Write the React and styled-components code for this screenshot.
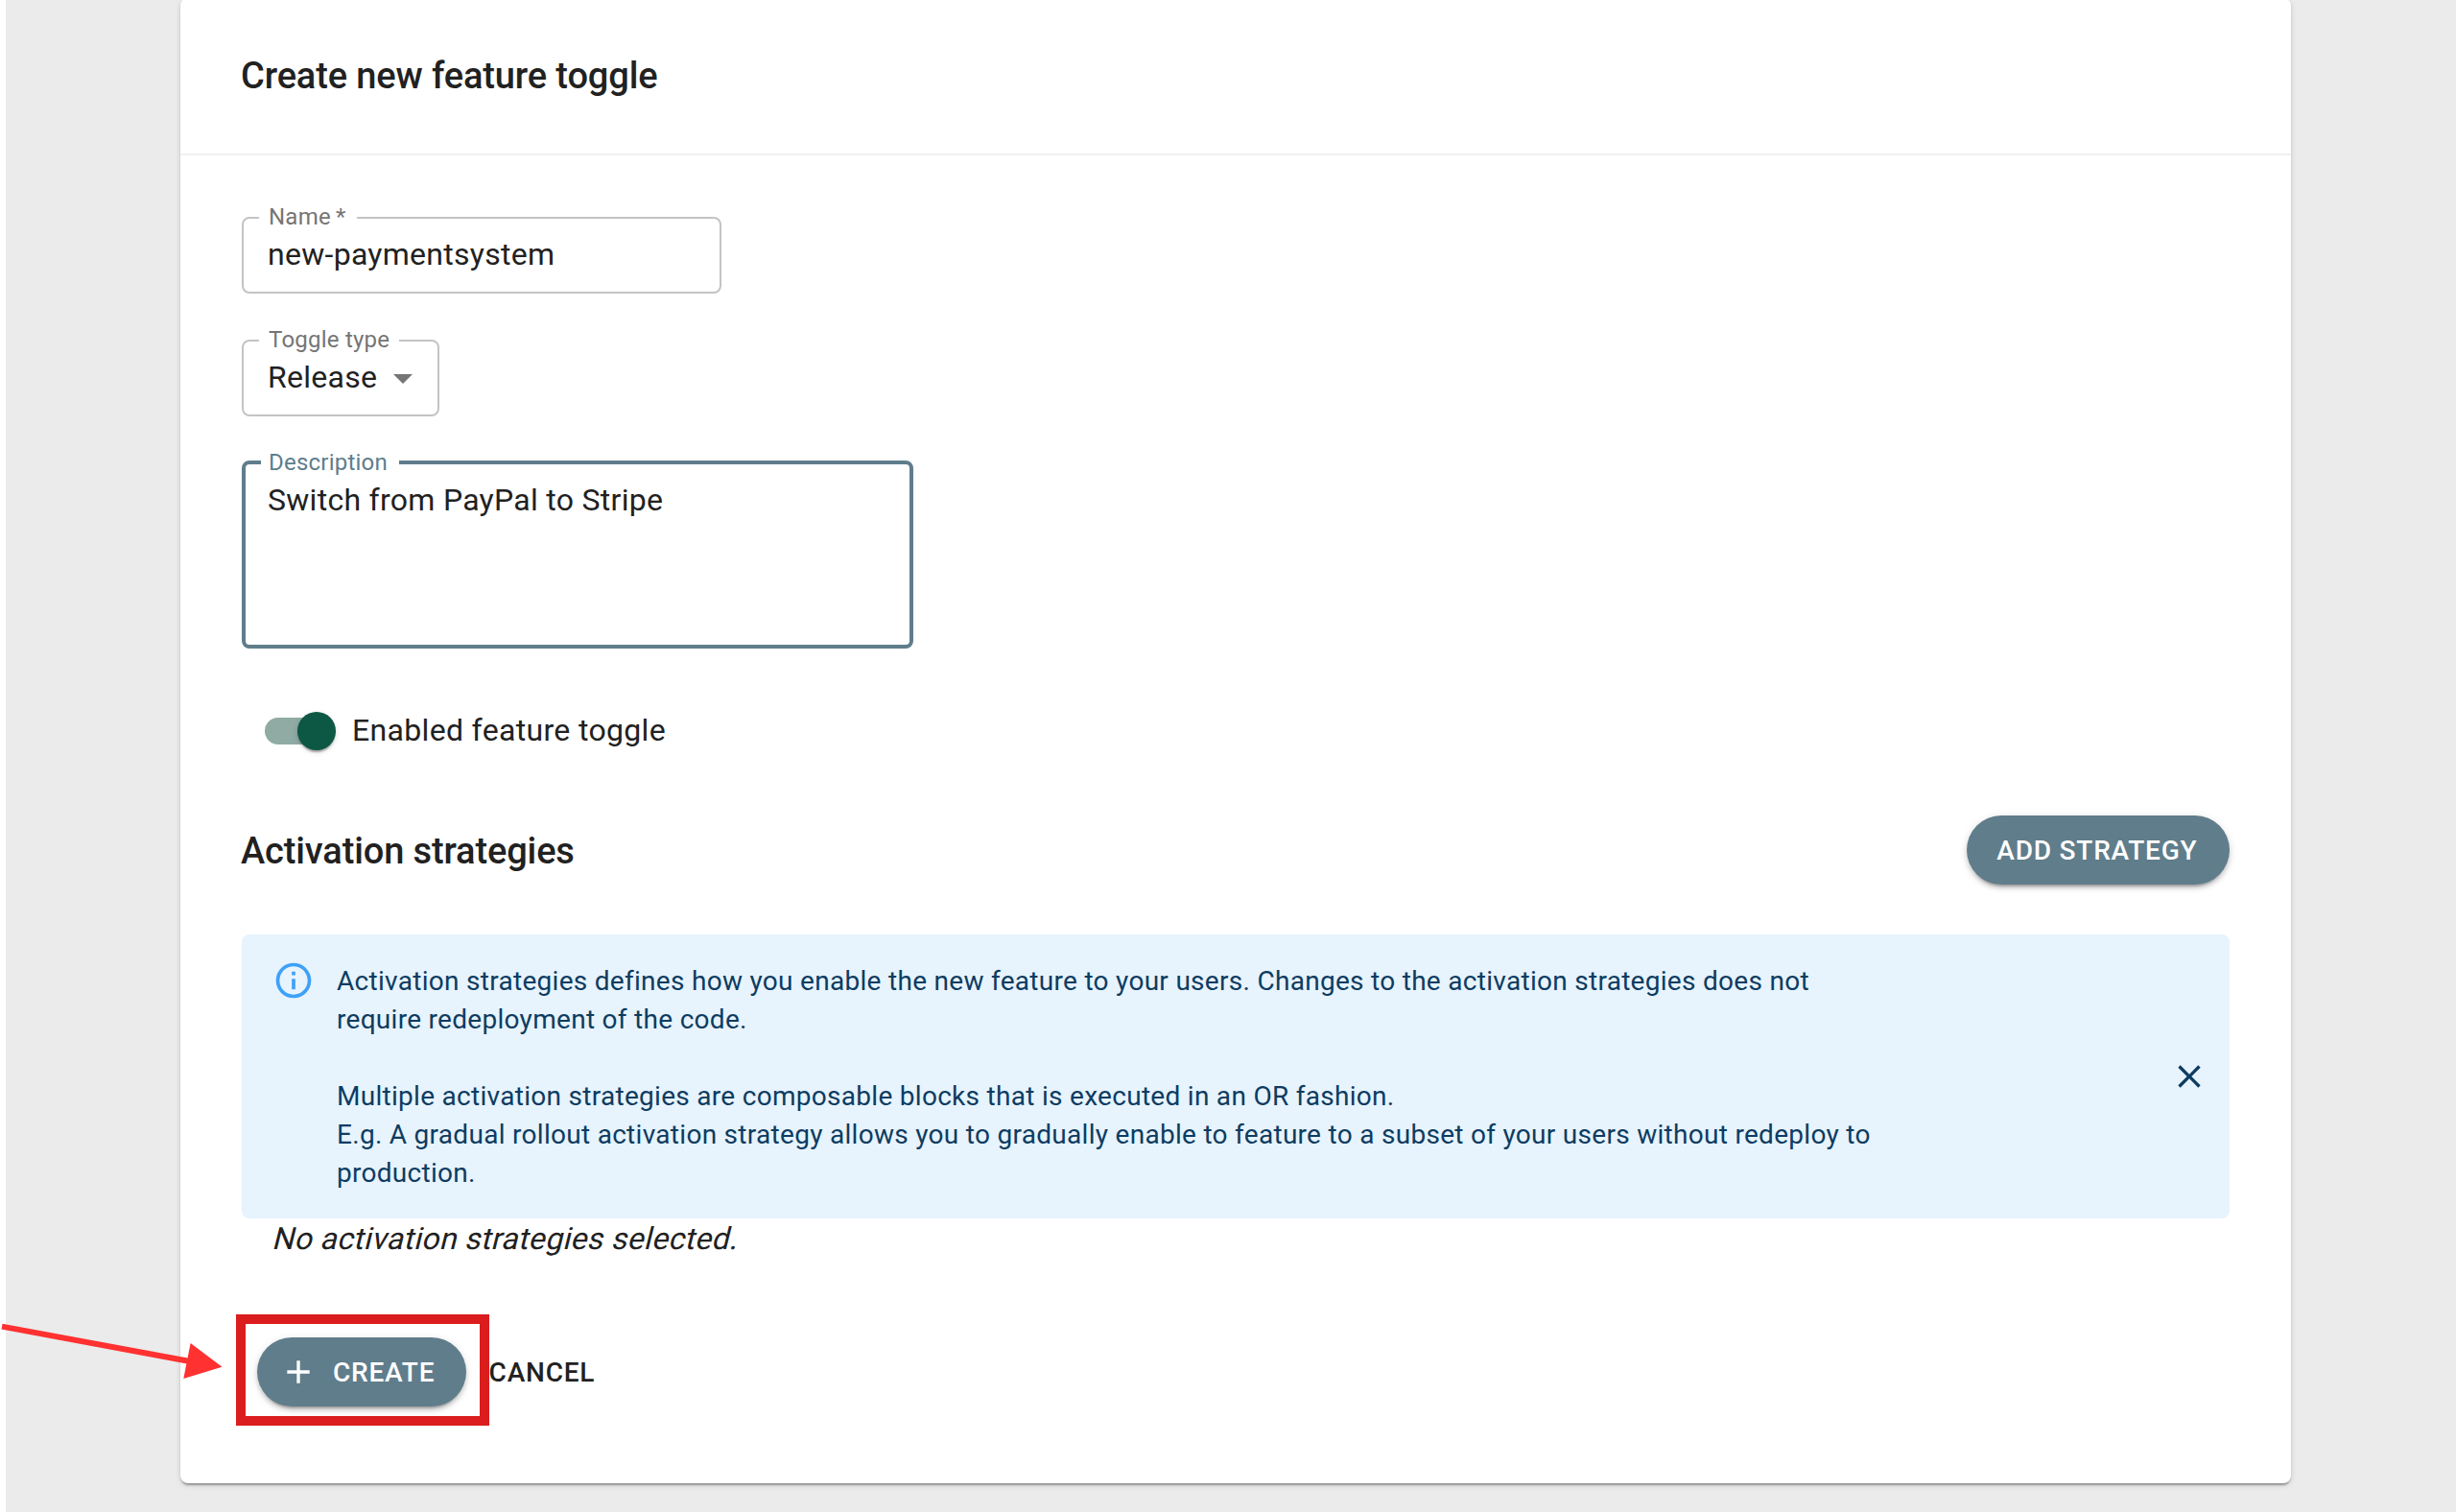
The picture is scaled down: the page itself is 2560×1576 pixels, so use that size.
import React from 'react';
import styled, { createGlobalStyle } from 'styled-components';

const PRIMARY = '#607d8b';
const TEXT = '#212121';

const GlobalStyle = createGlobalStyle`
  * { box-sizing: border-box; }
  body {
    margin: 0;
    background: #fff;
    color: ${TEXT};
    font-family: Roboto, "Liberation Sans", sans-serif;
  }
`;

const Page = styled.div`
  position: relative;
  height: 1576px;
  margin-left: 6px;
  padding: 0 172px 0 182px;
  background: #ebebeb;
  overflow: hidden;
`;

const Card = styled.main`
  height: 1548px;
  margin-top: -2px;
  background: #fff;
  border-radius: 8px;
  box-shadow:
    0 4px 2px -2px rgba(0, 0, 0, 0.2),
    0 2px 2px 0 rgba(0, 0, 0, 0.14),
    0 2px 6px 0 rgba(0, 0, 0, 0.12);
`;

const CardHeader = styled.header`
  display: flex;
  align-items: center;
  height: 164px;
  padding: 0 63px;
  border-bottom: 2px solid #f1f1f1;
`;

const Heading = styled.h2`
  margin: 0;
  font-size: 38px;
  font-weight: 500;
  line-height: 46px;
  letter-spacing: -0.13px;
`;

const CardBody = styled.div`
  display: flex;
  flex-direction: column;
  align-items: flex-start;
  padding: 64px 64px 0;
`;

const Field = styled.div`
  position: relative;
  display: flex;
  align-items: flex-start;
  width: ${(p) => p.$width}px;
  height: ${(p) => p.$height}px;
  margin-bottom: ${(p) => p.$gap}px;
  padding: ${(p) => (p.$focused ? '18px 23px' : '18px 25px')};
  border: ${(p) => (p.$focused ? `4px solid ${PRIMARY}` : '2px solid #c4c4c4')};
  border-radius: 8px;
`;

const FieldLabel = styled.label`
  position: absolute;
  top: -16px;
  left: 16px;
  width: ${(p) => p.$notch}px;
  padding-left: ${(p) => (p.$focused ? 8 : 10)}px;
  background: #fff;
  color: ${(p) => (p.$focused ? PRIMARY : '#757575')};
  font-size: 24px;
  line-height: 28px;
  letter-spacing: 0.225px;
  word-spacing: ${(p) => p.$wordGap || 0}px;
  white-space: nowrap;
`;

const FieldValue = styled.div`
  font-size: 32px;
  line-height: 38px;
  letter-spacing: 0.28px;
  white-space: nowrap;
`;

const Caret = styled.svg`
  width: 48px;
  height: 48px;
  margin: -4px -13px 0 auto;
  fill: #757575;
`;

const SwitchRow = styled.label`
  display: flex;
  align-items: center;
  height: 76px;
  padding-left: 24px;
  font-size: 32px;
`;

const Track = styled.span`
  display: flex;
  align-items: center;
  justify-content: flex-end;
  width: 68px;
  height: 28px;
  margin-right: 23px;
  border-radius: 14px;
  background: #8faba3;
`;

const Thumb = styled.span`
  flex: none;
  width: 40px;
  height: 40px;
  margin-right: -6px;
  border-radius: 50%;
  background: #0d5844;
  box-shadow:
    0 4px 2px -2px rgba(0, 0, 0, 0.2),
    0 2px 2px 0 rgba(0, 0, 0, 0.14),
    0 2px 6px 0 rgba(0, 0, 0, 0.12);
`;

const SwitchText = styled.span`
  line-height: 38px;
  letter-spacing: 0.33px;
  padding-bottom: 2px;
`;

const SectionHeader = styled.div`
  display: flex;
  align-items: center;
  justify-content: space-between;
  width: 100%;
  height: 72px;
  margin-top: 50px;

  ${Heading} {
    margin-left: -1px;
    padding-top: 2px;
  }
`;

const Button = styled.button`
  display: flex;
  align-items: center;
  height: 72px;
  padding: ${(p) => (p.$icon ? '0 32.8px 0 23px' : '0 33.5px 0 31.5px')};
  gap: ${(p) => (p.$icon ? 16 : 0)}px;
  border: 0;
  border-radius: 36px;
  background: ${PRIMARY};
  color: #fff;
  font: 500 28px/49px Roboto, "Liberation Sans", sans-serif;
  letter-spacing: 0.8px;
  white-space: nowrap;
  box-shadow:
    0 6px 2px -4px rgba(0, 0, 0, 0.2),
    0 4px 4px 0 rgba(0, 0, 0, 0.14),
    0 2px 10px 0 rgba(0, 0, 0, 0.12);
`;

const TextButton = styled(Button)`
  margin-left: 23.5px;
  padding: 0;
  background: none;
  color: ${TEXT};
  box-shadow: none;
`;

const Icon = styled.svg`
  flex: none;
  width: ${(p) => p.$size}px;
  height: ${(p) => p.$size}px;
  fill: currentColor;
`;

const Alert = styled.section`
  display: flex;
  width: 100%;
  height: 296px;
  margin-top: 52px;
  padding: 26px 22px 0 32px;
  border-radius: 8px;
  background: #e7f3fd;
  color: #0d3c61;
`;

const InfoBadge = styled.span`
  display: flex;
  align-self: flex-start;
  margin-right: 23px;
  color: #3ea1f8;
`;

const AlertMessage = styled.p`
  flex: 1;
  margin: 3px 0 0;
  font-size: 28px;
  line-height: 40px;
  letter-spacing: 0.29px;
`;

const CloseButton = styled.span`
  display: flex;
  align-self: center;
  margin-bottom: 26px;
`;

const EmptyNote = styled.p`
  margin: 0 0 0 31px;
  font-size: 32px;
  line-height: 42px;
  letter-spacing: 0.32px;
  transform: skewX(-14deg);
  transform-origin: 0 32px;
`;

const Actions = styled.div`
  display: flex;
  align-items: center;
  margin: 82px 0 0 16px;
`;

const Highlight = styled.div`
  position: relative;

  &::after {
    content: '';
    position: absolute;
    inset: -24px -24px -20px -22px;
    border: 10px solid #db1d1d;
  }
`;

const Arrow = styled.svg`
  position: absolute;
  top: 1360px;
  left: 0;
`;

const ArrowLayer = styled.div`
  position: absolute;
  inset: 0;
  height: 1576px;
  overflow: hidden;
  pointer-events: none;
`;

export default function App() {
  return (
    <>
      <GlobalStyle />
      <Page>
        <Card>
          <CardHeader>
            <Heading>Create new feature toggle</Heading>
          </CardHeader>
          <CardBody>
            <Field $width={500} $height={80} $gap={48}>
              <FieldLabel $notch={102} $wordGap={-1}>Name *</FieldLabel>
              <FieldValue>new-paymentsystem</FieldValue>
            </Field>
            <Field $width={206} $height={80} $gap={46}>
              <FieldLabel $notch={146}>Toggle type</FieldLabel>
              <FieldValue>Release</FieldValue>
              <Caret viewBox="0 0 24 24">
                <path d="M7 10l5 5 5-5z" />
              </Caret>
            </Field>
            <Field $width={700} $height={196} $gap={48} $focused>
              <FieldLabel $notch={144} $focused>Description</FieldLabel>
              <FieldValue>Switch from PayPal to Stripe</FieldValue>
            </Field>
            <SwitchRow>
              <Track>
                <Thumb />
              </Track>
              <SwitchText>Enabled feature toggle</SwitchText>
            </SwitchRow>
            <SectionHeader>
              <Heading>Activation strategies</Heading>
              <Button>ADD STRATEGY</Button>
            </SectionHeader>
            <Alert>
              <InfoBadge>
                <Icon $size={44} viewBox="0 0 24 24">
                  <path d="M11 7h2v2h-2zm0 4h2v6h-2zm1-9C6.48 2 2 6.48 2 12s4.48 10 10 10 10-4.48 10-10S17.52 2 12 2zm0 18c-4.41 0-8-3.59-8-8s3.59-8 8-8 8 3.59 8 8-3.59 8-8 8z" />
                </Icon>
              </InfoBadge>
              <AlertMessage>
                Activation strategies defines how you enable the new feature to your users. Changes to the activation strategies does not
                <br />
                require redeployment of the code.
                <br />
                <br />
                Multiple activation strategies are composable blocks that is executed in an OR fashion.
                <br />
                E.g. A gradual rollout activation strategy allows you to gradually enable to feature to a subset of your users without redeploy to
                <br />
                production.
              </AlertMessage>
              <CloseButton>
                <Icon $size={40} viewBox="0 0 24 24">
                  <path d="M19 6.41L17.59 5 12 10.59 6.41 5 5 6.41 10.59 12 5 17.59 6.41 19 12 13.41 17.59 19 19 17.59 13.41 12z" />
                </Icon>
              </CloseButton>
            </Alert>
            <EmptyNote>No activation strategies selected.</EmptyNote>
            <Actions>
              <Highlight>
                <Button $icon>
                  <Icon $size={40} viewBox="0 0 24 24">
                    <path d="M19 13h-6v6h-2v-6H5v-2h6V5h2v6h6v2z" />
                  </Icon>
                  CREATE
                </Button>
              </Highlight>
              <TextButton>CANCEL</TextButton>
            </Actions>
          </CardBody>
        </Card>
      </Page>
      <ArrowLayer>
        <Arrow width="240" height="100" viewBox="0 1360 240 100">
          <path d="M2 1382.6L198 1419" stroke="#ff3131" strokeWidth="6" />
          <path d="M198.6 1400L231.5 1424.8L191.3 1437Z" fill="#ff3131" />
        </Arrow>
      </ArrowLayer>
    </>
  );
}
